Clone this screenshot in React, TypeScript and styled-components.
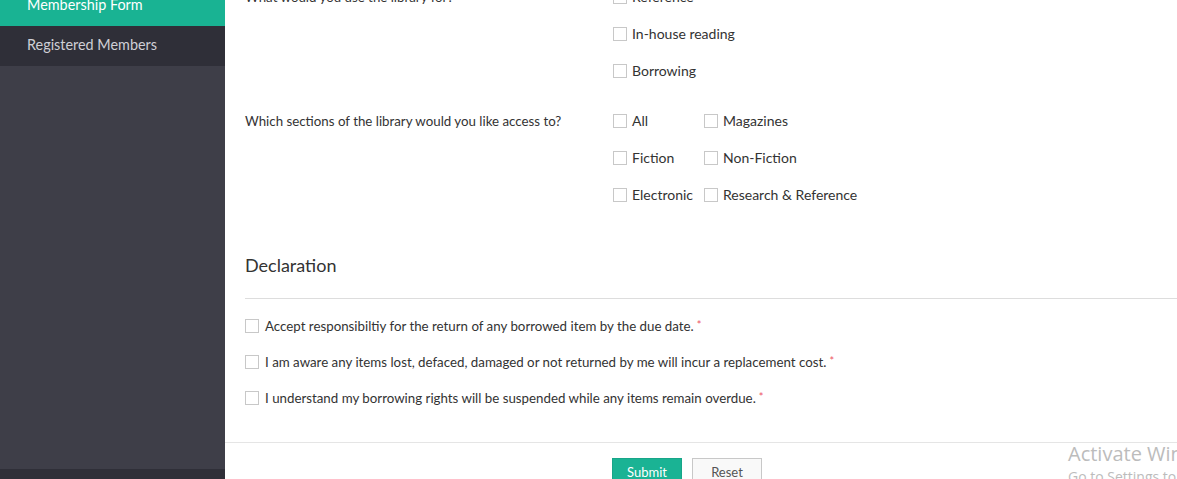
import React from "react";
import styled, { createGlobalStyle } from "styled-components";

const GlobalStyle = createGlobalStyle`
  html, body { margin: 0; padding: 0; background: #fff; }
  body { font-family: Lato, "Open Sans", "DejaVu Sans", sans-serif; }
  #root { width: 1177px; height: 479px; overflow: hidden; }
`;

const Page = styled.div`
  position: relative;
  display: grid;
  grid-template-columns: 225px 1fr;
  height: 479px;
  overflow: hidden;
`;

const Sidebar = styled.aside`
  display: flex;
  flex-direction: column;
  background: #3e3e48;
  overflow: hidden;
`;

const NavList = styled.nav`
  display: flex;
  flex-direction: column;
  margin-top: -14px;
`;

const NavItem = styled.a<{ $active?: boolean }>`
  display: flex;
  align-items: center;
  height: 40px;
  box-sizing: border-box;
  padding: 0 0 3px 27px;
  font-size: 14.4px;
  text-decoration: none;
  background: ${(p) => (p.$active ? "#19b393" : "#2f2f38")};
  color: ${(p) => (p.$active ? "#ffffff" : "#cfcfd6")};
`;

const SidebarSpacer = styled.div`
  flex: 1;
`;

const SidebarFooter = styled.div`
  height: 10px;
  background: #2f2f38;
`;

const Main = styled.main`
  overflow: hidden;
  display: flex;
  flex-direction: column;
`;

const Form = styled.form`
  display: flex;
  flex-direction: column;
  margin-top: -22px;
`;

const Fields = styled.div`
  display: flex;
  flex-direction: column;
  gap: 13px;
  padding-left: 20px;
`;

const FieldRow = styled.div`
  display: grid;
  grid-template-columns: 368px 1fr;
`;

const Question = styled.div`
  height: 37px;
  display: flex;
  align-items: center;
  font-size: 13.3px;
  color: #333;
`;

const Options = styled.div<{ $cols: number }>`
  display: grid;
  grid-template-columns: ${(p) => (p.$cols === 2 ? "91px auto" : "auto")};
  grid-auto-rows: 37px;
  justify-content: start;
`;

const Option = styled.label<{ $gap?: number; $size?: number }>`
  display: flex;
  align-items: center;
  gap: ${(p) => p.$gap ?? 5}px;
  font-size: ${(p) => p.$size ?? 14}px;
  color: #333;
  white-space: nowrap;
`;

const Box = styled.input.attrs({ type: "checkbox" })`
  appearance: none;
  -webkit-appearance: none;
  margin: 0;
  width: 14px;
  height: 14px;
  box-sizing: border-box;
  border: 1px solid #c8c8c8;
  background: #fff;
  flex: none;
`;

const Section = styled.section`
  margin-top: 42px;
  padding-left: 20px;
`;

const SectionTitle = styled.h3`
  margin: 0;
  font-size: 18px;
  line-height: 1.2;
  font-weight: 400;
  color: #333;
`;

const Divider = styled.hr`
  margin: 21px 0 9px;
  border: 0;
  border-top: 1px solid #dddddd;
`;

const DeclList = styled.div`
  display: grid;
  grid-auto-rows: 36px;
`;

const DeclText = styled.span``;

const Req = styled.span`
  color: #ed5565;
  font-size: 11px;
  margin-left: 3px;
  vertical-align: top;
  line-height: 1.3;
`;

const FormFooter = styled.div`
  margin-top: 26px;
  border-top: 1px solid #e5e5e5;
  padding: 15px 0 0 387px;
  display: flex;
  gap: 10px;
`;

const Button = styled.button<{ $primary?: boolean }>`
  width: 70px;
  height: 30px;
  padding: 5px 0 0;
  font-family: inherit;
  font-size: 13px;
  border: 1px solid ${(p) => (p.$primary ? "#18a689" : "#c8c8c8")};
  background: ${(p) => (p.$primary ? "#1ab394" : "#f9f9f9")};
  color: ${(p) => (p.$primary ? "#fff" : "#555")};
  display: flex;
  align-items: flex-start;
  justify-content: center;
  box-sizing: border-box;
`;

const Watermark = styled.div`
  position: absolute;
  left: 1068px;
  top: 441px;
  font-family: "Open Sans", "Noto Sans", sans-serif;
  color: #bcbcbc;
  white-space: nowrap;
`;

const WatermarkTitle = styled.div`
  font-size: 20px;
  line-height: 26px;
`;

const WatermarkSub = styled.div`
  font-size: 14px;
  line-height: 20px;
`;

const useOptions = ["Reference", "In-house reading", "Borrowing"];
const sectionOptions = [
  "All",
  "Magazines",
  "Fiction",
  "Non-Fiction",
  "Electronic",
  "Research & Reference",
];
const declarations = [
  "Accept responsibiltiy for the return of any borrowed item by the due date.",
  "I am aware any items lost, defaced, damaged or not returned by me will incur a replacement cost.",
  "I understand my borrowing rights will be suspended while any items remain overdue.",
];

export default function App() {
  return (
    <>
      <GlobalStyle />
      <Page>
        <Sidebar>
          <NavList>
            <NavItem $active>Membership Form</NavItem>
            <NavItem>Registered Members</NavItem>
          </NavList>
          <SidebarSpacer />
          <SidebarFooter />
        </Sidebar>
        <Main>
          <Form onSubmit={(e) => e.preventDefault()}>
            <Fields>
              <FieldRow>
                <Question>What would you use the library for?</Question>
                <Options $cols={1}>
                  {useOptions.map((o) => (
                    <Option key={o}>
                      <Box />
                      {o}
                    </Option>
                  ))}
                </Options>
              </FieldRow>
              <FieldRow>
                <Question>Which sections of the library would you like access to?</Question>
                <Options $cols={2}>
                  {sectionOptions.map((o) => (
                    <Option key={o}>
                      <Box />
                      {o}
                    </Option>
                  ))}
                </Options>
              </FieldRow>
            </Fields>
            <Section>
              <SectionTitle>Declaration</SectionTitle>
              <Divider />
              <DeclList>
                {declarations.map((d) => (
                  <Option key={d} $gap={6} $size={13.3}>
                    <Box />
                    <DeclText>
                      {d}
                      <Req>*</Req>
                    </DeclText>
                  </Option>
                ))}
              </DeclList>
            </Section>
            <FormFooter>
              <Button $primary type="submit">Submit</Button>
              <Button type="reset">Reset</Button>
            </FormFooter>
          </Form>
        </Main>
        <Watermark>
          <WatermarkTitle>Activate Windows</WatermarkTitle>
          <WatermarkSub>Go to Settings to activate Windows.</WatermarkSub>
        </Watermark>
      </Page>
    </>
  );
}
